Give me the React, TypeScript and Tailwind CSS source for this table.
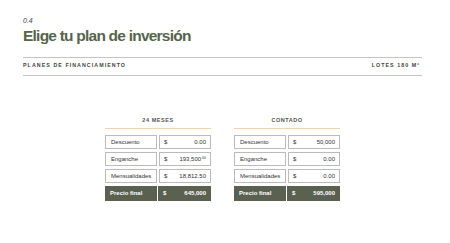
const plans = [
  {
    title: '24 MESES',
    rows: [
      { label: 'Descuento', value: '0.00' },
      { label: 'Enganche', value: '193,500', sup: '00' },
      { label: 'Mensualidades', value: '18,812.50' },
    ],
    total: '645,000',
  },
  {
    title: 'CONTADO',
    rows: [
      { label: 'Descuento', value: '50,000' },
      { label: 'Enganche', value: '0.00' },
      { label: 'Mensualidades', value: '0.00' },
    ],
    total: '595,000',
  },
];

type Row = { label: string; value: string; sup?: string };

function PlanTable({ title, rows, total }: { title: string; rows: Row[]; total: string }) {
  return (
    <div className="w-[106px]">
      <div className="text-center text-[5.5px] font-bold tracking-[0.1em] text-[#555] pb-[4px]">{title}</div>
      <div className="h-[1.5px] bg-[#f3d3b4] mb-[6px]" />
      <div className="flex flex-col gap-[3px]">
        {rows.map((r) => (
          <div key={r.label} className="flex gap-[2px] text-[6px] text-[#333]">
            <div className="w-[52px] h-[14px] border border-[#bbb] flex items-center pl-[5px]">{r.label}</div>
            <div className="flex-1 h-[14px] border border-[#bbb] flex items-center justify-between px-[4px]">
              <span>$</span>
              <span>
                {r.value}
                {r.sup && <sup className="text-[3.5px] ml-[1px]">{r.sup}</sup>}
              </span>
            </div>
          </div>
        ))}
        <div className="flex bg-[#5a6150] h-[15px] text-[6px] text-white font-semibold">
          <div className="w-[53px] flex items-center pl-[5px] border-r border-white">Precio final</div>
          <div className="flex-1 flex items-center justify-between px-[5px]">
            <span>$</span>
            <span className="font-bold">{total}</span>
          </div>
        </div>
      </div>
    </div>
  );
}

export default function App() {
  return (
    <div className="w-[450px] h-[243px] bg-white px-[23px] pt-[17px]" style={{ fontFamily: '"Liberation Sans", Arial, sans-serif' }}>
      <div className="italic text-[7px] text-[#444] leading-none">0.4</div>
      <h1 className="text-[15.5px] font-bold text-[#56644b] leading-none mt-[4px] tracking-[-0.05em]">Elige tu plan de inversión</h1>

      <div className="mt-[13px] w-[399px] border-t border-b border-[#c4c4c4] h-[19px] flex items-center justify-between text-[5.3px] font-bold tracking-[0.2em] text-[#444]">
        <span>PLANES DE FINANCIAMIENTO</span>
        <span className="pr-[2px]">LOTES 180 M²</span>
      </div>

      <div className="flex justify-center gap-[23px] mt-[40px] w-[399px]">
        {plans.map((p) => (
          <PlanTable key={p.title} title={p.title} rows={p.rows} total={p.total} />
        ))}
      </div>
    </div>
  );
}
